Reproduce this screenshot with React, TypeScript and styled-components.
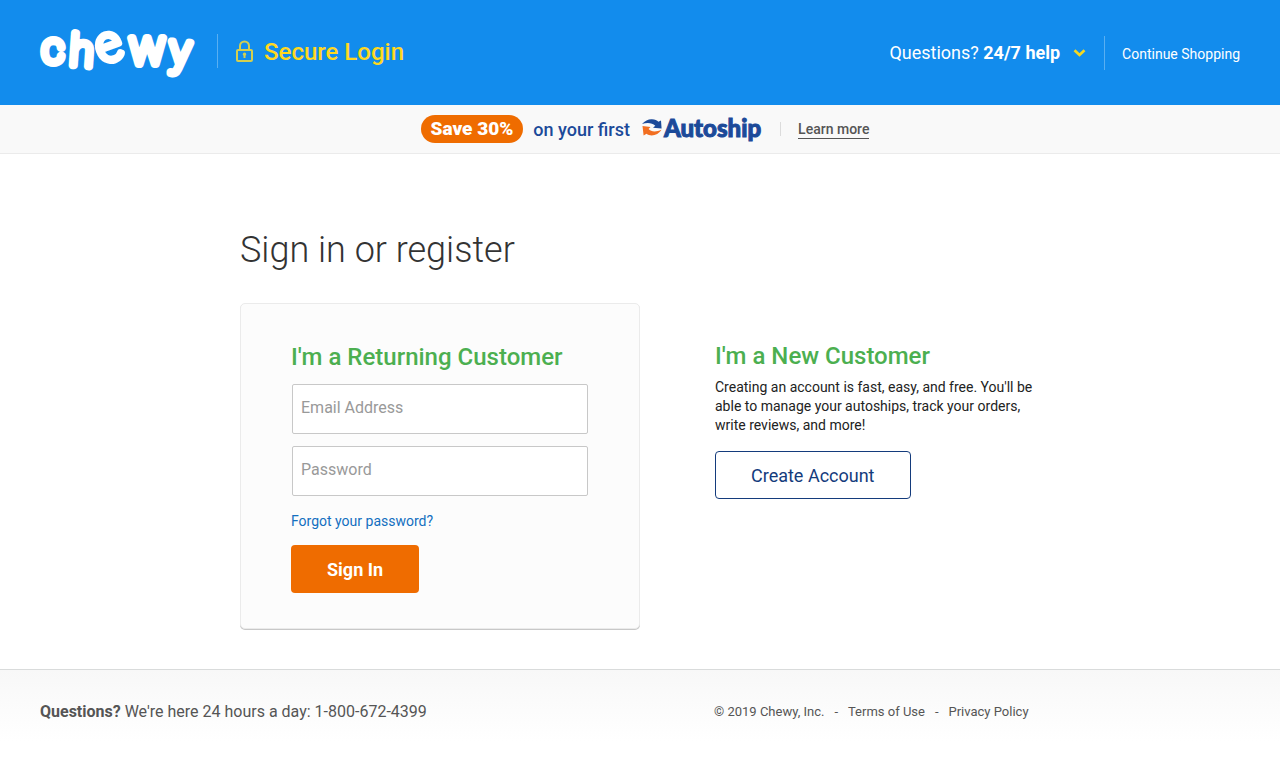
import React from "react";
import styled, { createGlobalStyle } from "styled-components";

const GlobalStyle = createGlobalStyle`
  *, *::before, *::after { box-sizing: border-box; }
  body {
    margin: 0;
    background: #fff;
    color: #222;
    font-family: Roboto, "Liberation Sans", sans-serif;
    font-size: 14px;
  }
  a { color: inherit; text-decoration: none; }
  h1, h2, p { margin: 0; }
`;

const Header = styled.header`
  display: flex;
  align-items: center;
  height: 105px;
  padding: 0 40px;
  background: #128ced;
  color: #fff;
`;

const HomeLink = styled.a`
  display: flex;
  width: 156px;
`;

const Divider = styled.span<{ $height: number; $color: string }>`
  flex: none;
  width: 1px;
  height: ${(p) => p.$height}px;
  background: ${(p) => p.$color};
`;

const Secure = styled.div`
  display: flex;
  align-items: center;
  gap: 11px;
  margin-left: 21px;
  padding-bottom: 3px;
  color: #ffd81f;
  font-size: 24px;
  font-weight: 500;
  line-height: 30px;

  ${Divider} { margin-right: 7px; }
`;

const SecureLabel = styled.span`
  padding-top: 2px;
`;

const HeaderNav = styled.nav`
  display: flex;
  align-items: center;
  margin-left: auto;
`;

const HelpButton = styled.button`
  display: flex;
  align-items: center;
  gap: 13px;
  padding: 0;
  margin-right: 18px;
  border: 0;
  background: none;
  color: inherit;
  font: 400 18px/24px Roboto, "Liberation Sans", sans-serif;
  cursor: pointer;
`;

const ContinueLink = styled.a`
  margin-left: 17px;
  padding-top: 2px;
  font-size: 14px;
  line-height: 20px;
`;

const Promo = styled.aside`
  display: flex;
  align-items: center;
  justify-content: center;
  height: 49px;
  padding-left: 10px;
  border-bottom: 1px solid #ebebeb;
  background: #f9f9f9;
  color: #1c4a99;
  font-size: 18px;
  font-weight: 500;
`;

const Pill = styled.strong`
  padding: 0 10px;
  margin-right: 10px;
  border-radius: 14px;
  background: #ef6c00;
  color: #fff;
  font-size: 19px;
  font-weight: 900;
  line-height: 28px;
`;

const Autoship = styled.span`
  display: flex;
  align-items: center;
  gap: 2px;
  margin: 0 19px 0 12px;
  padding-bottom: 2px;
  font-family: Lato, sans-serif;
  font-size: 24px;
  font-weight: 900;
  line-height: 28px;
  -webkit-text-stroke: 1px #1c4a99;
`;

const LearnMore = styled.a`
  margin-left: 17px;
  border-bottom: 1px solid #555;
  color: #555;
  font-size: 14px;
  line-height: 18px;
`;

const Main = styled.main`
  max-width: 800px;
  margin: 0 auto;
  padding: 72px 0 40px;
`;

const Title = styled.h1`
  margin-bottom: 29px;
  color: #333;
  font-size: 36px;
  font-weight: 300;
  line-height: 48px;
`;

const Columns = styled.div`
  display: grid;
  grid-template-columns: 1fr 1fr;
  align-items: start;
`;

const Card = styled.form`
  display: flex;
  flex-direction: column;
  align-items: flex-start;
  padding: 38px 50px 35px;
  border: 1px solid #ebebeb;
  border-radius: 5px;
  background: #fcfcfc;
  box-shadow: 0 1px 0 #c8c8c8;
`;

const Register = styled.section`
  padding: 38px 0 0 75px;
`;

const Heading = styled.h2`
  color: #4caf50;
  font-size: 24px;
  font-weight: 500;
  line-height: 30px;
`;

const Field = styled.input`
  width: calc(100% - 2px);
  height: 50px;
  margin: 12px 1px 0;
  padding: 0 8px 4px;
  border: 1px solid #c8c8c8;
  border-radius: 2px;
  background: #fff;
  color: #222;
  font: 400 16px/20px Roboto, "Liberation Sans", sans-serif;

  &::placeholder { color: #999; opacity: 1; }
`;

const Forgot = styled.a`
  margin: 15px 0 14px;
  color: #136fc0;
  font-size: 14px;
  line-height: 20px;
`;

const Button = styled.button<{ $primary?: boolean }>`
  height: 48px;
  padding: 2px ${(p) => (p.$primary ? 36 : 35)}px 0;
  border: ${(p) => (p.$primary ? "0" : "1px solid #143b7c")};
  border-radius: 4px;
  background: ${(p) => (p.$primary ? "#ef6c00" : "#fff")};
  color: ${(p) => (p.$primary ? "#fff" : "#143b7c")};
  font: ${(p) => (p.$primary ? 700 : 400)} 18px/24px Roboto, "Liberation Sans", sans-serif;
  cursor: pointer;
`;

const Blurb = styled.p`
  margin: 7px 0 16px;
  line-height: 19px;
`;

const Footer = styled.footer`
  border-top: 1px solid #d9dbdb;
  background: linear-gradient(#f8f8f8, #fff 72px);
`;

const FooterInner = styled.div`
  display: grid;
  grid-template-columns: 674px auto;
  align-items: center;
  justify-content: start;
  padding: 32px 40px 50px;
  color: #555;
  line-height: 20px;
`;

const Phone = styled.p`
  font-size: 16px;
`;

const Legal = styled.p`
  display: flex;
  gap: 10px;
  font-size: 13px;
`;

const LogoSvg = styled.svg`
  overflow: visible;
  fill: #fff;
  stroke: #fff;
  stroke-width: 8px;
  stroke-linejoin: round;
  font-family: Roboto, sans-serif;
  font-weight: 100;
`;

const Logo = () => (
  <LogoSvg width="156" height="50" viewBox="0 0 156 50" role="img" aria-label="chewy">
    <text x="2" y="35" fontSize="43">c</text>
    <text x="29" y="37" fontSize="43" transform="rotate(4 29 37)">h</text>
    <text x="62" y="36" fontSize="49" strokeWidth="7" transform="rotate(-20 62 36)">e</text>
    <text x="89" y="36" fontSize="48">w</text>
    <text x="129" y="36" fontSize="43" transform="rotate(4 129 36)">y</text>
  </LogoSvg>
);

const Lock = () => (
  <svg width="17" height="22" viewBox="0 0 17 22" fill="none" stroke="#d3cf50" aria-hidden="true">
    <rect x="1" y="10" width="15" height="11" rx="1" strokeWidth="2" />
    <path d="M4 10V6a4.500 4.500 0 0 1 9 0v4" strokeWidth="2" />
    <path d="M8.500 13v5" strokeWidth="2" />
    <circle cx="8.500" cy="14.200" r="1.600" fill="#d3cf50" stroke="none" />
  </svg>
);

const Chevron = () => (
  <svg width="13" height="10" viewBox="0 0 13 10" fill="none" aria-hidden="true">
    <path d="M1.500 2.200 6.500 7l5-4.800" stroke="#f4d821" strokeWidth="2.600" />
  </svg>
);

const CycleArrows = () => (
  <svg width="20" height="18" viewBox="0 0 20 18" aria-hidden="true">
    <path fill="#1c4a99" d="M0 5C3 1.500 7 0 10 .3c3 .2 5 1 6.400 2.500L19 1.500l.6 8-8.600-.7 2.300-2C10 3.500 5 3.300 0 5Z" />
    <path fill="#f26f21" d="M.5 7 8.500 8 6.600 10c2.400 3 7.400 3.300 12.900.8-3 5.200-10.500 7.500-15 4L1.600 16.500Z" />
  </svg>
);

export default function App() {
  return (
    <>
      <GlobalStyle />
      <Header>
        <HomeLink href="#home"><Logo /></HomeLink>
        <Secure>
          <Divider $height={34} $color="#59aff2" />
          <Lock />
          <SecureLabel>Secure Login</SecureLabel>
        </Secure>
        <HeaderNav>
          <HelpButton type="button">
            <span>Questions? <b>24/7 help</b></span>
            <Chevron />
          </HelpButton>
          <Divider $height={34} $color="#59aff2" />
          <ContinueLink href="#shop">Continue Shopping</ContinueLink>
        </HeaderNav>
      </Header>
      <Promo>
        <Pill>Save 30%</Pill>
        <span>on your first</span>
        <Autoship><CycleArrows />Autoship</Autoship>
        <Divider $height={14} $color="#dcdcdc" />
        <LearnMore href="#autoship">Learn more</LearnMore>
      </Promo>
      <Main>
        <Title>Sign in or register</Title>
        <Columns>
          <Card onSubmit={(e) => e.preventDefault()}>
            <Heading>I'm a Returning Customer</Heading>
            <Field type="email" placeholder="Email Address" aria-label="Email Address" />
            <Field type="password" placeholder="Password" aria-label="Password" />
            <Forgot href="#forgot">Forgot your password?</Forgot>
            <Button $primary type="submit">Sign In</Button>
          </Card>
          <Register>
            <Heading>I'm a New Customer</Heading>
            <Blurb>
              Creating an account is fast, easy, and free. You'll be able to manage your
              autoships, track your orders, write reviews, and more!
            </Blurb>
            <Button type="button">Create Account</Button>
          </Register>
        </Columns>
      </Main>
      <Footer>
        <FooterInner>
          <Phone><b>Questions?</b> We're here 24 hours a day: 1-800-672-4399</Phone>
          <Legal>
            <span>© 2019 Chewy, Inc.</span>
            <span>-</span>
            <a href="#terms">Terms of Use</a>
            <span>-</span>
            <a href="#privacy">Privacy Policy</a>
          </Legal>
        </FooterInner>
      </Footer>
    </>
  );
}
